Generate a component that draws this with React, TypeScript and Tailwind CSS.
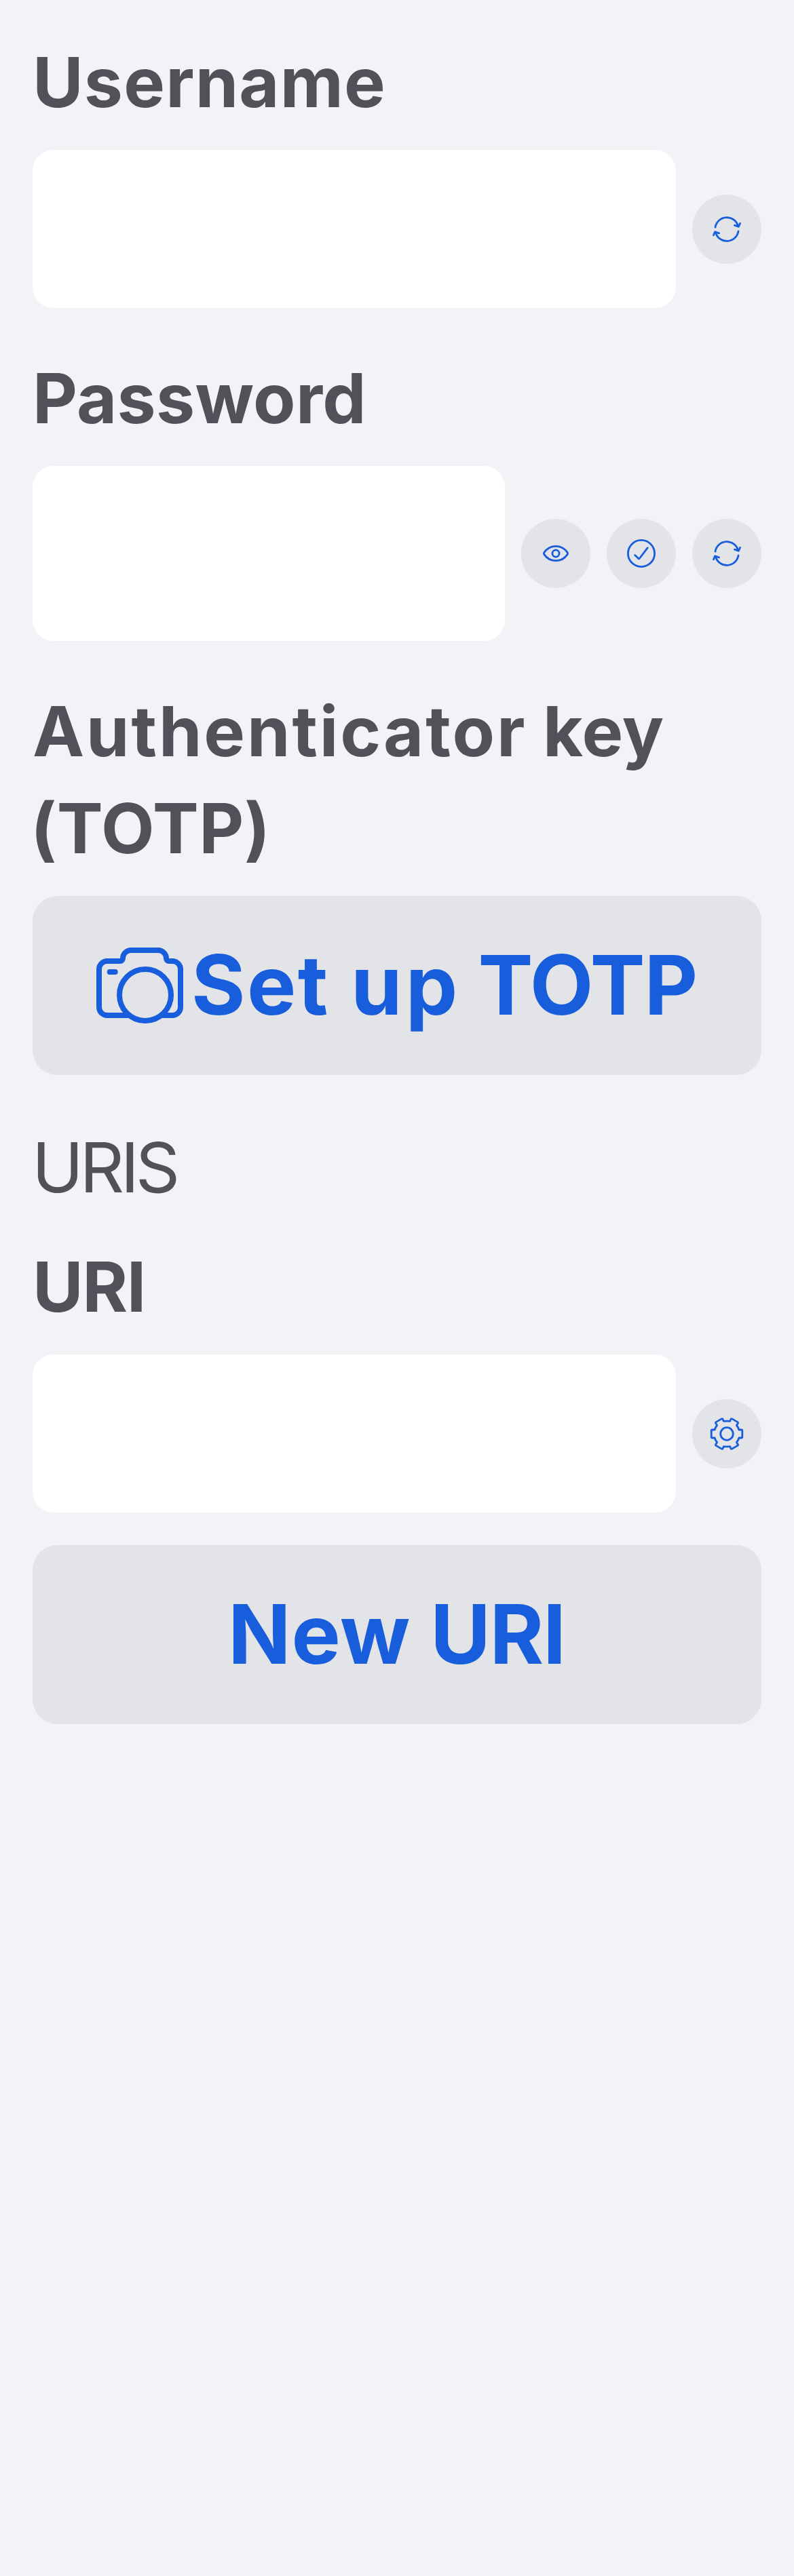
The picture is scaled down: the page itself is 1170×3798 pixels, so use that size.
import type { ReactNode } from "react";

const ICON_STROKE = {
  fill: "none",
  stroke: "currentColor",
  strokeWidth: 2.8,
  strokeLinecap: "round" as const,
  strokeLinejoin: "round" as const,
};

function RefreshIcon() {
  return (
    <svg viewBox="0 0 102 102" className="size-[102px]" {...ICON_STROKE}>
      <path d="M34 48A17.2 17.2 0 0 1 67.6 46.4" />
      <path d="M62.4 45.2L68.4 47.2L70.6 42.2" />
      <path d="M68 54A17.2 17.2 0 0 1 34.4 55.6" />
      <path d="M39.6 56.8L33.6 54.8L31.4 59.8" />
    </svg>
  );
}

function EyeIcon() {
  return (
    <svg viewBox="0 0 102 102" className="size-[102px]" {...ICON_STROKE}>
      <path d="M33.8 52.4Q32.8 51 33.8 49.6C38 43.5 44.5 40.3 51 40.3S64 43.5 68.2 49.6Q69.2 51 68.2 52.4C64 58.5 57.5 61.7 51 61.7S38 58.5 33.8 52.4Z" />
      <circle cx="51" cy="51" r="5.1" />
    </svg>
  );
}

function CheckIcon() {
  return (
    <svg viewBox="0 0 102 102" className="size-[102px]" {...ICON_STROKE}>
      <circle cx="51" cy="51" r="19.6" />
      <path d="M41.6 53.5L46.9 58.6Q47.6 59.2 48.2 58.5L60.3 42.7" />
    </svg>
  );
}

function GearIcon() {
  return (
    <svg viewBox="0 0 102 102" className="size-[102px]" {...ICON_STROKE}>
      <g transform="translate(51 51)">
        <path d="M-4.6 -18.6Q0 -19.2 4.6 -18.6L5.9 -21.5Q6.5 -22.7 7.7 -22.1L15.8 -17.4Q17 -16.7 16.3 -15.5L14.4 -12.5Q16.8 -9.8 17.9 -6L21.4 -6Q22.8 -6 22.8 -4.6L22.8 4.6Q22.8 6 21.4 6L17.9 6Q16.8 9.8 14.4 12.5L16.3 15.5Q17 16.7 15.8 17.4L7.7 22.1Q6.5 22.7 5.9 21.5L4.6 18.6Q0 19.2 -4.6 18.6L-5.9 21.5Q-6.5 22.7 -7.7 22.1L-15.8 17.4Q-17 16.7 -16.3 15.5L-14.4 12.5Q-16.8 9.8 -17.9 6L-21.4 6Q-22.8 6 -22.8 4.6L-22.8 -4.6Q-22.8 -6 -21.4 -6L-17.9 -6Q-16.8 -9.8 -14.4 -12.5L-16.3 -15.5Q-17 -16.7 -15.8 -17.4L-7.7 -22.1Q-6.5 -22.7 -5.9 -21.5Z" />
        <circle r="9.3" />
      </g>
    </svg>
  );
}

function CameraIcon() {
  return (
    <svg
      viewBox="0 0 128 112"
      className="h-[112px] w-[128px] shrink-0"
      fill="none"
      stroke="currentColor"
      strokeWidth={8}
    >
      <path d="M48 100H16A12 12 0 0 1 4 88V32A12 12 0 0 1 16 20H35A4 4 0 0 0 39 16A12 12 0 0 1 51 4H91A12 12 0 0 1 103 16A4 4 0 0 0 107 20H112A12 12 0 0 1 124 32V88A12 12 0 0 1 112 100H96" />
      <circle cx="72" cy="70" r="38" />
      <path d="M19.7 36H27.7" strokeLinecap="round" />
    </svg>
  );
}

function RoundButton({ label, children }: { label: string; children: ReactNode }) {
  return (
    <button
      aria-label={label}
      className="flex size-[102px] shrink-0 items-center justify-center rounded-full bg-[#e2e4e8] text-[#175ddc]"
    >
      {children}
    </button>
  );
}

function FieldRow({ height, children }: { height: string; children: ReactNode }) {
  return (
    <div className="mt-7 flex items-center gap-6">
      <div className={`min-w-0 flex-1 rounded-[31px] bg-white ${height}`} />
      {children}
    </div>
  );
}

export default function App() {
  return (
    <main className="flex min-h-[3798px] w-[1170px] flex-col bg-[#f2f2f7] px-12 pt-[50px] font-['Inter',sans-serif] text-[102px] leading-[143px] font-bold text-[#515159]">
      <h2 className="tracking-[1.2px]">Username</h2>
      <FieldRow height="h-[233px]">
        <RoundButton label="Generate username">
          <RefreshIcon />
        </RoundButton>
      </FieldRow>

      <h2 className="mt-[62px] tracking-[0.3px]">Password</h2>
      <FieldRow height="h-[258px]">
        <RoundButton label="Show password">
          <EyeIcon />
        </RoundButton>
        <RoundButton label="Check password">
          <CheckIcon />
        </RoundButton>
        <RoundButton label="Generate password">
          <RefreshIcon />
        </RoundButton>
      </FieldRow>

      <h2 className="mt-[62px] whitespace-nowrap">
        <span className="inline-block w-[752px] tracking-[2.9px] whitespace-pre">Authenticator </span>
        <span className="tracking-[0.5px]">key</span>
        <span className="-ml-[3px] block tracking-[0.4px]">(TOTP)</span>
      </h2>
      <button className="mt-7 flex h-[264px] items-center rounded-[37px] bg-[#e2e4e8] pl-[94px] text-left text-[121.5px] whitespace-nowrap text-[#175ddc]">
        <CameraIcon />
        <span className="ml-3 pb-[3px]">
          <span className="inline-block w-[235px] tracking-[2.4px] whitespace-pre">Set </span>
          <span className="inline-block w-[187.5px] tracking-[5px] whitespace-pre">up </span>
          <span className="tracking-[-1px]">TOTP</span>
        </span>
      </button>

      <h3 className="mt-[65px] -ml-px font-normal tracking-[-5.4px]">URIS</h3>
      <h2 className="mt-[33px] tracking-[-1.5px]">URI</h2>
      <FieldRow height="h-[233px]">
        <RoundButton label="URI settings">
          <GearIcon />
        </RoundButton>
      </FieldRow>
      <button className="mt-12 flex h-[264px] items-center rounded-[37px] bg-[#e2e4e8] pl-[288px] text-left text-[121.5px] whitespace-nowrap text-[#175ddc]">
        <span className="pb-[3px]">
          <span className="inline-block w-[298px] tracking-[0.8px] whitespace-pre">New </span>
          <span className="tracking-[-1.4px]">URI</span>
        </span>
      </button>
    </main>
  );
}
